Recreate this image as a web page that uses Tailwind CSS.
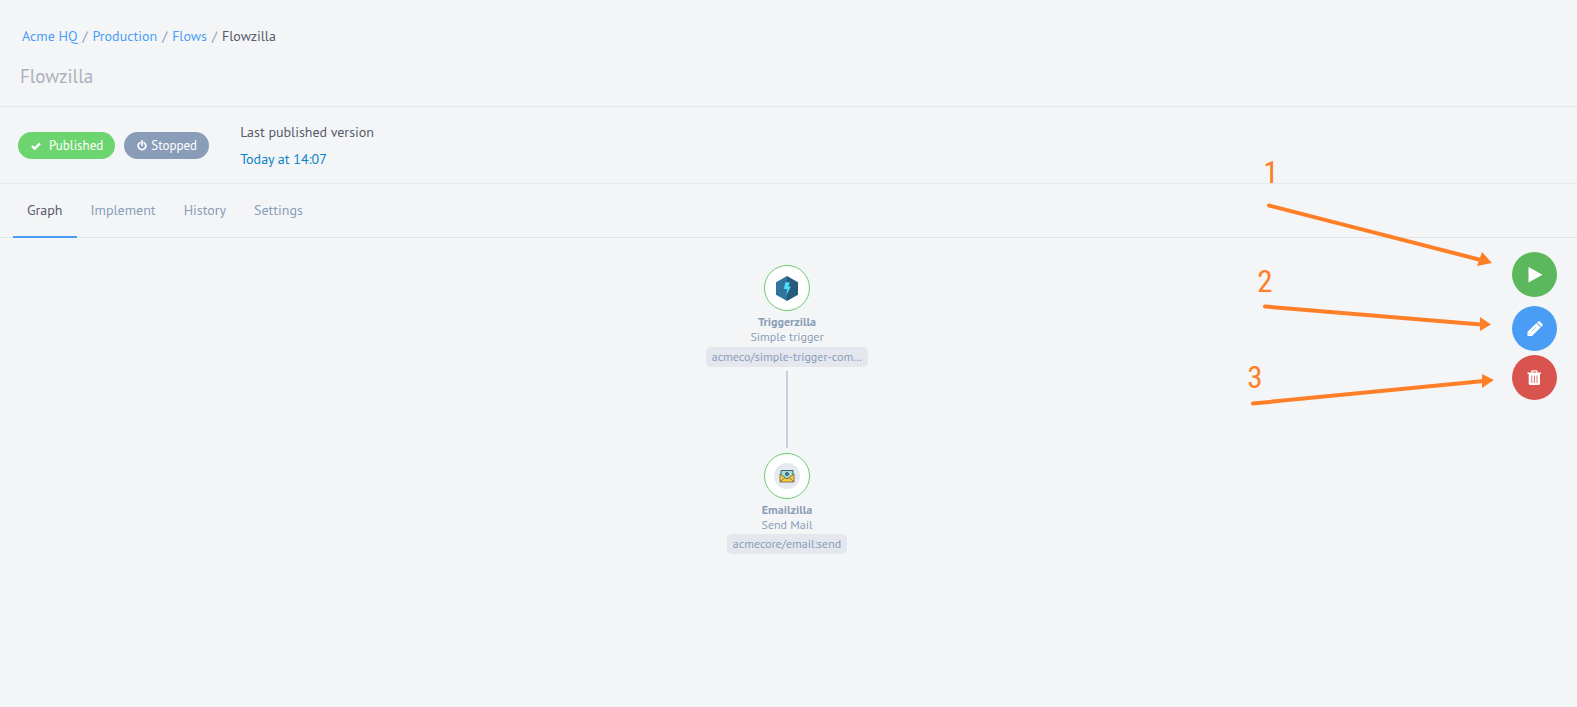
<!DOCTYPE html>
<html lang="en">
<head>
<meta charset="utf-8">
<meta name="viewport" content="width=device-width, initial-scale=1">
<title>Flowzilla</title>
<script src="https://cdn.jsdelivr.net/npm/@tailwindcss/browser@4"></script>
</head>
<body class="relative min-h-screen bg-[#f4f5f7] font-['PT_Sans','Noto_Sans',sans-serif] text-sm leading-5 text-[#565c6b]">
  <header class="border-b border-[#e6e8ec] px-5 pt-[26px] pb-4">
    <nav aria-label="Breadcrumb" class="pl-[2px]">
      <ol class="flex gap-[5px] text-[#8a9db8]">
        <li><a href="#" class="text-[#4a9df5]">Acme HQ</a></li>
        <li aria-hidden="true">/</li>
        <li><a href="#" class="text-[#4a9df5]">Production</a></li>
        <li aria-hidden="true">/</li>
        <li><a href="#" class="text-[#4a9df5]">Flows</a></li>
        <li aria-hidden="true">/</li>
        <li aria-current="page" class="text-[#565c6b]">Flowzilla</li>
      </ol>
    </nav>
    <h1 class="mt-4 text-[19px] leading-7 text-[#abb1bb]">Flowzilla</h1>
  </header>

  <section class="flex items-start border-b border-[#e6e8ec] px-[18px] pt-3 pb-[10px]">
    <span class="mt-[13px] flex h-[27px] items-center gap-2 rounded-full bg-[#6dd56f] pr-3 pl-[13px] text-[13px] text-white">
      <svg class="w-[10px] h-[8px]" viewBox="0 0 10 8" aria-hidden="true"><path d="M1 4l2.700 2.700L9 1.300" fill="none" stroke="#fff" stroke-width="2.400"/></svg>
      Published
    </span>
    <span class="mt-[13px] ml-[9px] flex h-[27px] items-center gap-1 rounded-full bg-[#8a9db8] pr-3 pl-[13px] text-[13px] text-white">
      <svg class="w-[10px] h-[11px]" viewBox="0 0 10 11" aria-hidden="true"><path d="M3 2.600a3.800 3.800 0 1 0 4 0M5 .8v4.700" fill="none" stroke="#fff" stroke-width="1.700" stroke-linecap="round"/></svg>
      Stopped
    </span>
    <div class="ml-[31px] leading-[27px]">
      <p>Last published version</p>
      <p><a href="#" class="text-[#0a84cc]">Today at 14:07</a></p>
    </div>
  </section>

  <nav aria-label="Flow sections" class="flex h-[54px] border-b border-[#e1e4e8] px-[13px] text-[#8a9db8]">
    <a href="#" aria-current="page" class="-mb-px border-b-2 border-[#4a9df5] px-[14px] pt-4 text-[#565c6b]">Graph</a>
    <a href="#" class="px-[14px] pt-4">Implement</a>
    <a href="#" class="px-[14px] pt-4">History</a>
    <a href="#" class="px-[14px] pt-4">Settings</a>
  </nav>

  <main class="flex flex-col items-center pt-[27px] pr-[3px] text-xs leading-[15px] text-[#8a9db8]">
    <article class="flex flex-col items-center">
      <div class="flex size-[46px] items-center justify-center rounded-full border border-[#6cc96e] bg-white">
        <svg class="w-[22px] h-[25px]" viewBox="0 0 22 25" aria-hidden="true">
          <path d="M11 0L0 6.250v12.500L11 25z" fill="#31759c"/>
          <path d="M11 0l11 6.250v12.500L11 25z" fill="#265b7d"/>
          <path d="M9.500 6.300h4.300l-1.300 4.200h2.300L10.600 19l.5-6H7.800z" fill="#4edcfb"/>
        </svg>
      </div>
      <h2 class="mt-[3px] font-bold">Triggerzilla</h2>
      <p>Simple trigger</p>
      <p class="mt-[3px] rounded-[5px] bg-[#e4e7ee] px-[6px] text-center leading-5">acmeco/simple-trigger-com…</p>
    </article>
    <div class="mt-1 mb-[5px] h-[77px] w-[2px] bg-[#c8cfdd]"></div>
    <article class="flex flex-col items-center">
      <div class="flex size-[46px] items-center justify-center rounded-full border border-[#6cc96e] bg-white">
        <svg class="size-[26px]" viewBox="0 0 26 26" aria-hidden="true">
          <circle cx="13" cy="13" r="13" fill="#e6eaee"/>
          <path d="M7 7.500h12v8H7z" fill="#9be0dc" stroke="#45616b"/>
          <path d="M6 11l7 5 7-5v8H6z" fill="#fbcd3c" stroke="#655c47" stroke-width=".8"/>
          <path d="M6 19l5-4.500M20 19l-5-4.500" stroke="#655c47" stroke-width=".8" fill="none"/>
          <circle cx="13" cy="11" r="1.500" fill="#668b91" stroke="#36535e"/>
        </svg>
      </div>
      <h2 class="mt-[3px] font-bold">Emailzilla</h2>
      <p>Send Mail</p>
      <p class="mt-[2px] rounded-[5px] bg-[#e4e7ee] px-[6px] text-center leading-5">acmecore/email:send</p>
    </article>
  </main>

  <div class="absolute top-[252px] right-5 flex flex-col">
    <button type="button" aria-label="Run flow" class="flex size-[45px] items-center justify-center rounded-full bg-[#5cb85c]">
      <svg class="size-4" viewBox="0 0 16 16" aria-hidden="true"><path d="M1.500 0L15.500 7.800 1.500 15.600z" fill="#fff"/></svg>
    </button>
    <button type="button" aria-label="Edit flow" class="mt-[9px] flex size-[45px] items-center justify-center rounded-full bg-[#4a9df5]">
      <svg class="size-4" viewBox="0 0 16 16" aria-hidden="true">
        <path d="M.5 15V10.700L9.300 2.300l4.300 4.200L5 15zM10 1.600L11.300.5q.8-.7 1.600 0l2.500 2.500q.7.800 0 1.600l-1.200 1.300z" fill="#fff"/>
        <path d="M1.700 12.500l1.500 1.500M4.500 10.500l5-4.800" stroke="#4a9df5" stroke-width=".6" fill="none"/>
      </svg>
    </button>
    <button type="button" aria-label="Delete flow" class="mt-1 flex size-[45px] items-center justify-center rounded-full bg-[#d9534f]">
      <svg class="size-4" viewBox="0 0 16 16" aria-hidden="true">
        <path d="M4.800 3V1.600Q4.800.8 5.600.8h3.500q.8 0 .8.800V3" fill="none" stroke="#fff" stroke-width="1.300"/>
        <path d="M.5 2.500H14V4h-1v9.500q0 1.500-1.500 1.500H3.200Q1.700 15 1.700 13.500V4H.5z" fill="#fff"/>
        <path d="M4.800 5.500v7.500M7.400 5.500v7.500M10 5.500v7.500" stroke="#d9534f" stroke-width=".8"/>
      </svg>
    </button>
  </div>

  <svg class="pointer-events-none absolute top-[150px] right-0 h-[270px] w-[337px]" viewBox="0 0 337 270" role="group" aria-label="Button callouts">
    <g fill="none" stroke="#ff7f27" stroke-width="4" stroke-linecap="round">
      <path d="M29 55.500L241 110"/>
      <path d="M25 156.500L241 174.500"/>
      <path d="M13 253.500L244 231"/>
    </g>
    <g fill="#ff7f27">
      <path d="M242 102l10 11-15 3z"/>
      <path d="M240 167l11 7.500-11 6.500z"/>
      <path d="M242 224l12 6-12 8z"/>
    </g>
    <g fill="#ff7f27" font-family="'Roboto Condensed', Roboto, sans-serif" font-size="31" font-weight="400" text-anchor="middle">
      <text x="31" y="33">1</text>
      <text x="25" y="142">2</text>
      <text x="15" y="238">3</text>
    </g>
  </svg>
</body>
</html>
